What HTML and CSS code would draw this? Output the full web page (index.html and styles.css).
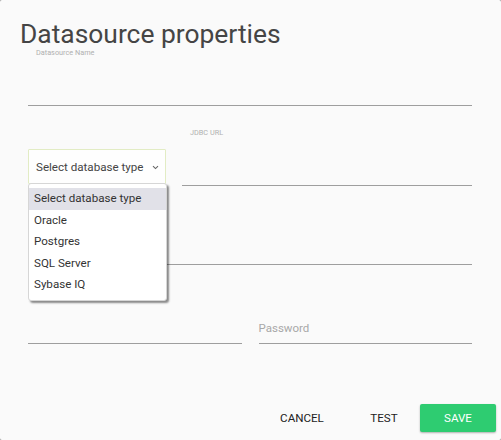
FILE: index.html
```html
<!DOCTYPE html>
<html>
<head>
<meta charset="utf-8">
<link rel="stylesheet" href="styles.css">
</head>
<body>
<div class="dialog">
  <h1 class="title">Datasource properties</h1>
  <div class="fields">
    <div class="field">
      <div class="label">Datasource Name</div>
      <div class="area"></div>
    </div>
    <div class="row row-db">
      <div class="select-wrap">
        <div class="select">
          <span>Select database type</span>
          <svg class="chev" width="7" height="5" viewBox="0 0 7 5"><path d="M1 1.2 L3.5 3.6 L6 1.2" fill="none" stroke="#666" stroke-width="1.1"/></svg>
        </div>
        <ul class="menu">
          <li class="active">Select database type</li>
          <li>Oracle</li>
          <li>Postgres</li>
          <li>SQL Server</li>
          <li>Sybase IQ</li>
        </ul>
      </div>
      <div class="field grow">
        <div class="label">JDBC URL</div>
        <div class="area"></div>
      </div>
    </div>
    <div class="field gap">
      <div class="label"></div>
      <div class="area"></div>
    </div>
    <div class="row gap">
      <div class="field half">
        <div class="label"></div>
        <div class="area"></div>
      </div>
      <div class="field half">
        <div class="label"></div>
        <div class="area"><span class="ph">Password</span></div>
      </div>
    </div>
  </div>
  <div class="actions">
    <button class="btn cancel">CANCEL</button>
    <button class="btn test">TEST</button>
    <button class="btn save">SAVE</button>
  </div>
</div>
</body>
</html>
```
FILE: styles.css
```css
html, body {
  margin: 0;
  padding: 0;
  background: #9a9a9a;
}
body {
  width: 501px;
  height: 440px;
  font-family: Roboto, "Liberation Sans", sans-serif;
}
.dialog {
  width: 501px;
  height: 440px;
  box-sizing: border-box;
  background: #fafafa;
  border-radius: 2px;
  padding: 19px 29px 0 20px;
  display: flex;
  flex-direction: column;
}
.title {
  margin: 0;
  font-size: 26.4px;
  line-height: 30px;
  font-weight: 400;
  color: #454545;
}
.fields {
  margin-left: 8px;
  display: flex;
  flex-direction: column;
}
.label {
  height: 8px;
  padding-left: 8px;
  font-size: 7.3px;
  line-height: 8px;
  color: #b0b0b0;
}
.area {
  height: 48px;
  border-bottom: 1px solid #9e9e9e;
  box-sizing: content-box;
  display: flex;
  align-items: flex-end;
}
.row {
  display: flex;
}
.row-db {
  margin-top: 23px;
  align-items: flex-end;
}
.gap {
  margin-top: 22px;
}
.grow {
  flex: 1;
  margin-left: 16px;
}
.half {
  width: 214px;
}
.half + .half {
  margin-left: 17px;
}
.ph {
  font-size: 11.5px;
  line-height: 16px;
  color: #a8a8a8;
  margin-bottom: 7px;
}
.select-wrap {
  position: relative;
  width: 138px;
  margin-bottom: 2px;
}
.select {
  height: 35px;
  box-sizing: border-box;
  border: 1px solid #e2ecc4;
  background: #fefefe;
  display: flex;
  align-items: center;
  justify-content: space-between;
  padding: 1px 6px 0 7px;
  font-size: 11.6px;
  color: #444;
  border-radius: 1px;
}
.chev {
  display: block;
  margin-top: 1px;
}
.menu {
  position: absolute;
  left: 0;
  top: 34px;
  width: 139px;
  box-sizing: border-box;
  margin: 0;
  padding: 4px 0;
  list-style: none;
  background: #fff;
  border: 1px solid #d6d6d6;
  border-radius: 3px;
  box-shadow: 2px 2px 2px rgba(0, 0, 0, 0.45);
  z-index: 2;
}
.menu li {
  height: 21.6px;
  line-height: 21.6px;
  padding-left: 5px;
  font-size: 11.6px;
  color: #333;
}
.menu li.active {
  background: #e1e1e8;
}
.actions {
  margin-top: 60px;
  margin-right: -24px;
  display: flex;
  justify-content: flex-end;
  align-items: center;
}
.btn {
  height: 28px;
  border: none;
  background: transparent;
  font-family: Roboto, "Liberation Sans", sans-serif;
  font-size: 11.6px;
  color: #222;
  padding: 0 16px;
  min-width: 64px;
  border-radius: 2px;
  cursor: pointer;
}
.cancel {
  width: 76px;
}
.test {
  margin-left: 12px;
}
.save {
  margin-left: 4px;
  width: 76px;
  background: #2ecc71;
  color: #fff;
  box-shadow: 0 1px 2px rgba(0, 0, 0, 0.3);
}
```
